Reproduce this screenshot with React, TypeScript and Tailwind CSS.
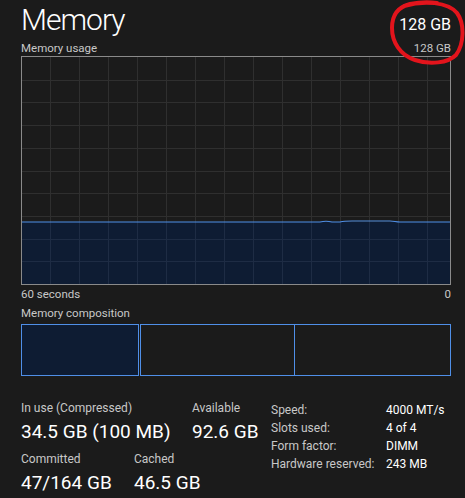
import React from "react";

const font = { fontFamily: '"Segoe UI", Roboto, "Noto Sans", sans-serif' };

const vLines = Array.from({ length: 14 }, (_, i) => 28.5 + i * 29);
const hLines = Array.from({ length: 9 }, (_, i) => Math.round((i + 1) * 22.7) + 0.5);

const UsageGraph = () => (
  <div className="w-[430px] h-[229px] border border-[#8a8a8a]">
    <svg width="428" height="227" className="block">
      <rect x="0" y="165" width="428" height="62" fill="#0e1c33" />
      {vLines.map((x) => (
        <line key={"v" + x} x1={x} y1="0" x2={x} y2="165" stroke="#2f2f2f" />
      ))}
      {hLines.map((y) => (
        <line key={"h" + y} x1="0" y1={y} x2="428" y2={y} stroke={y > 165 ? "#1e2c44" : "#2f2f2f"} />
      ))}
      {vLines.map((x) => (
        <line key={"f" + x} x1={x} y1="165" x2={x} y2="227" stroke="#1e2c44" />
      ))}
      <path
        d="M0 165 L298 165 C302 164 306 164 310 165 L318 165 C322 164 326 164 330 164 L368 164 C372 164 374 165 378 165 L428 165"
        fill="none"
        stroke="#4f8fe8"
        strokeWidth="1.2"
      />
    </svg>
  </div>
);

const Stat = ({ label, value, className = "" }: { label: string; value: string; className?: string }) => (
  <div className={className}>
    <div className="text-[12px] leading-[16px] text-[#c8c8c8]">{label}</div>
    <div className="text-[19px] leading-[24px] text-white mt-[4px]">{value}</div>
  </div>
);

const details = [
  ["Speed:", "4000 MT/s"],
  ["Slots used:", "4 of 4"],
  ["Form factor:", "DIMM"],
  ["Hardware reserved:", "243 MB"],
];

export default function App() {
  return (
    <div className="relative w-[465px] h-[498px] bg-[#1b1b1b] pl-[21px] overflow-hidden" style={font}>
      <div className="flex items-end justify-between w-[430px] pt-[1px]">
        <div className="text-[30px] leading-[38px] text-white tracking-[-1px] font-light">Memory</div>
        <div className="text-[16px] leading-[20px] text-white mb-[4px]">128 GB</div>
      </div>
      <div className="flex justify-between w-[430px] text-[11.5px] leading-[16px] text-[#c8c8c8] mt-[1px]">
        <span>Memory usage</span>
        <span>128 GB</span>
      </div>
      <UsageGraph />
      <div className="flex justify-between w-[430px] text-[11.5px] leading-[16px] text-[#c8c8c8] mt-[1px]">
        <span>60 seconds</span>
        <span>0</span>
      </div>
      <div className="text-[11.5px] leading-[16px] text-[#c8c8c8] mt-[3px]">Memory composition</div>
      <div className="flex h-[52px] w-[430px] mt-[3px]">
        <div className="w-[118px] border border-[#4f8fe8] bg-[#0e1c33]" />
        <div className="w-[155px] ml-[1px] border border-[#4f8fe8]" />
        <div className="w-[156px] border-y border-r border-[#4f8fe8]" />
      </div>
      <div className="flex mt-[24px]">
        <div className="w-[250px]">
          <div className="flex">
            <Stat label="In use (Compressed)" value="34.5 GB (100 MB)" className="w-[171px]" />
            <Stat label="Available" value="92.6 GB" />
          </div>
          <div className="flex mt-[7px]">
            <Stat label="Committed" value="47/164 GB" className="w-[113px]" />
            <Stat label="Cached" value="46.5 GB" />
          </div>
        </div>
        <div className="text-[12px] leading-[18px] pt-[1px]">
          {details.map(([k, v]) => (
            <div key={k} className="flex">
              <span className="w-[115px] text-[#c8c8c8]">{k}</span>
              <span className="text-white">{v}</span>
            </div>
          ))}
        </div>
      </div>
      <svg className="absolute left-0 top-0 pointer-events-none" width="465" height="80">
        <path
          d="M404 6 C424 0 448 2 457 13 C465 24 464 44 456 55 C448 63 430 65 415 60 C400 55 392 42 392 28 C392 15 398 7 410 4 C420 2 430 2 437 3"
          fill="none"
          stroke="#e3141c"
          strokeWidth="4"
          strokeLinecap="round"
        />
      </svg>
    </div>
  );
}
